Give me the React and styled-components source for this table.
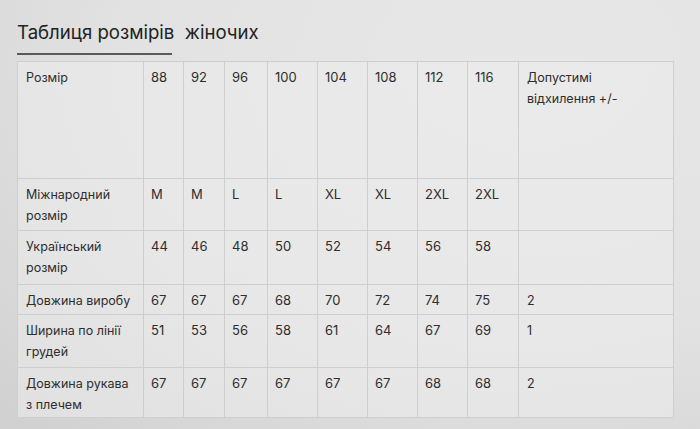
import React from "react";
import styled, { createGlobalStyle } from "styled-components";

const GlobalStyle = createGlobalStyle`
  html, body {
    margin: 0;
    padding: 0;
  }
  body {
    width: 700px;
    height: 429px;
    overflow: hidden;
    background: radial-gradient(ellipse at 75% 15%, #e7e7e7 0%, #e2e2e2 55%, #d0d0d0 100%);
    font-family: Inter, "Noto Sans", sans-serif;
    color: #2b2b2b;
  }
`;

const columns = [126, 40, 41, 43, 50, 50, 50, 50, 51, 155];

const rows = [
  {
    label: "Розмір",
    values: ["88", "92", "96", "100", "104", "108", "112", "116"],
    extra: ["Допустимі", "відхилення +/-"],
    height: 117,
  },
  {
    label: "Міжнародний розмір",
    values: ["M", "M", "L", "L", "XL", "XL", "2XL", "2XL"],
    extra: [],
    height: 52,
  },
  {
    label: "Український розмір",
    values: ["44", "46", "48", "50", "52", "54", "56", "58"],
    extra: [],
    height: 54,
  },
  {
    label: "Довжина виробу",
    values: ["67", "67", "67", "68", "70", "72", "74", "75"],
    extra: ["2"],
    height: 30,
  },
  {
    label: "Ширина по лінії грудей",
    values: ["51", "53", "56", "58", "61", "64", "67", "69"],
    extra: ["1"],
    height: 53,
  },
  {
    label: "Довжина рукава з плечем",
    values: ["67", "67", "67", "67", "67", "67", "68", "68"],
    extra: ["2"],
    height: 50,
  },
];

const Page = styled.div`
  padding: 19px 0 0 17px;
`;

const Title = styled.h2`
  display: inline-block;
  margin: 0;
  font-size: 18.6px;
  font-weight: 400;
  color: #222;
  white-space: pre;
  line-height: 26px;
`;

const TitleLine = styled.div`
  width: 155px;
  height: 2px;
  background: #5a5a5a;
  margin-top: 8px;
`;

const Table = styled.table`
  margin-top: 6px;
  border-collapse: collapse;
  table-layout: fixed;
  width: ${columns.reduce((a, b) => a + b, 0)}px;
  background: rgba(236, 237, 236, 0.55);
`;

const Row = styled.tr`
  height: ${(p) => p.$h}px;
`;

const Cell = styled.td`
  border: 1px solid #cdcfce;
  vertical-align: top;
  padding: ${(p) => (p.$tight ? "5px 8px 0" : "5px 8px 0")};
  font-size: 12.5px;
  line-height: 21px;
  color: #2e2e2e;
  box-sizing: border-box;
`;

const Num = styled(Cell)`
  font-size: 13px;
  padding-left: 7px;
`;

const Line = styled.span`
  display: block;
`;

export default function App() {
  return (
    <>
      <GlobalStyle />
      <Page>
        <Title>{"Таблиця розмірів  жіночих"}</Title>
        <TitleLine />
        <Table>
          <colgroup>
            {columns.map((w, i) => (
              <col key={i} style={{ width: w }} />
            ))}
          </colgroup>
          <tbody>
            {rows.map((r) => (
              <Row key={r.label} $h={r.height}>
                <Cell $tight={r.height < 40}>{r.label}</Cell>
                {r.values.map((v, i) => (
                  <Num key={i} $tight={r.height < 40}>
                    {v}
                  </Num>
                ))}
                <Cell $tight={r.height < 40}>
                  {r.extra.map((t) => (
                    <Line key={t}>{t}</Line>
                  ))}
                </Cell>
              </Row>
            ))}
          </tbody>
        </Table>
      </Page>
    </>
  );
}
